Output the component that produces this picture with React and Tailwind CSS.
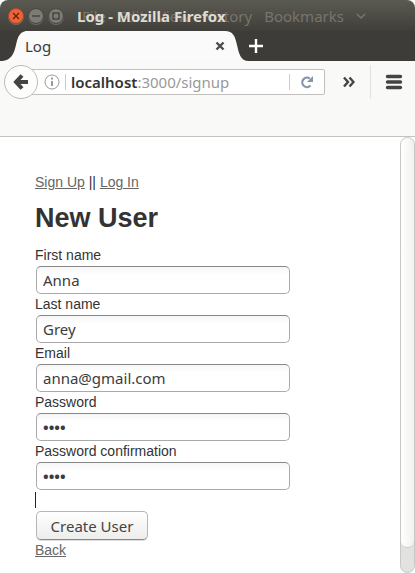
import React from 'react';

const uiFont = "font-['Noto_Sans','Open_Sans',sans-serif]";

const fields = [
  { id: 'first', label: 'First name', type: 'text', value: 'Anna' },
  { id: 'last', label: 'Last name', type: 'text', value: 'Grey' },
  { id: 'email', label: 'Email', type: 'text', value: 'anna@gmail.com' },
  { id: 'password', label: 'Password', type: 'password', value: 'abcd' },
  { id: 'confirm', label: 'Password confirmation', type: 'password', value: 'abcd' },
];

function WindowButton({ label, close, children }) {
  return (
    <button
      type="button"
      aria-label={label}
      className={`flex size-4 items-center justify-center rounded-full border shadow-[0_1px_0_#6b6a62] ${
        close ? 'border-[#a04a2c] bg-[#ee6237] text-[#5b1f0e]' : 'border-[#45443f] bg-[#7d7b73] text-[#3b3a36]'
      }`}
    >
      <svg viewBox="0 0 10 10" className="size-[10px] shrink-0" fill="none" stroke="currentColor" strokeWidth="1.2">
        {children}
      </svg>
    </button>
  );
}

function TitleBar() {
  return (
    <header className="relative flex h-[31px] items-center rounded-t-lg bg-linear-to-b from-[#5b5a52] to-[#413f3a] px-2">
      <div className="flex gap-1">
        <WindowButton label="Close" close>
          <path d="M2 2l6 6M8 2l-6 6" />
        </WindowButton>
        <WindowButton label="Minimize">
          <path d="M1 5h8" />
        </WindowButton>
        <WindowButton label="Maximize">
          <rect x="2" y="2" width="6" height="6" />
        </WindowButton>
      </div>
      <div className="ml-[18px] flex gap-3 whitespace-pre text-[15px] leading-5 text-[#77756d]">
        <span>File</span>
        <span>Edit</span>
        <span>View</span>
        <span>History</span>
        <span>Bookmarks</span>
        <svg viewBox="0 0 10 20" className="w-[10px]" fill="none" stroke="currentColor" strokeWidth="1.5">
          <path d="M1 8l4 4 4-4" />
        </svg>
      </div>
      <h2 className="absolute left-[77px] top-[6px] whitespace-nowrap text-[15px] font-bold leading-5 text-[#dfdbd2]">
        Log - Mozilla Firefox
      </h2>
    </header>
  );
}

function TabStrip() {
  return (
    <div className="flex h-[30px] bg-[#3d3c38]">
      <svg viewBox="0 0 28 30" className="h-[30px] w-7 shrink-0">
        <path d="M0 30C12 30 14 22 16 14C18 5 20 0 28 0V30Z" fill="#fafafa" />
      </svg>
      <div className="-ml-[3px] flex w-[200px] items-center justify-between bg-[#fafafa] text-[15px] text-[#3c3c3c]">
        <span>Log</span>
        <button type="button" aria-label="Close tab" className="text-[#4a4a4a]">
          <svg viewBox="0 0 10 10" className="size-[10px]" fill="none" stroke="currentColor" strokeWidth="2.4">
            <path d="M1.5 1.5l7 7M8.5 1.5l-7 7" />
          </svg>
        </button>
      </div>
      <svg viewBox="0 0 24 30" className="h-[30px] w-6 shrink-0">
        <path d="M0 0C8 0 10 5 12 14C14 22 15 30 24 30H0Z" fill="#fafafa" />
      </svg>
      <button type="button" aria-label="New tab" className="text-white">
        <svg viewBox="0 0 14 14" className="size-[14px]" fill="none" stroke="currentColor" strokeWidth="2.4">
          <path d="M7 0v14M0 7h14" />
        </svg>
      </button>
    </div>
  );
}

function Toolbar() {
  return (
    <div className="h-[76px] border-b border-[#c3c3c1] bg-[#f9f9f8] pl-1 pr-3">
      <div className="flex h-[41px] items-center">
        <button
          type="button"
          aria-label="Back"
          className="z-10 flex size-[34px] shrink-0 items-center justify-center rounded-full border border-[#bdbbb6] bg-[#fdfdfc] text-[#444]"
        >
          <svg viewBox="0 0 16 16" className="size-4" fill="none" stroke="currentColor" strokeWidth="4">
            <path d="M9 1.5L3 8l6 6.5M3.5 8H15" />
          </svg>
        </button>
        <div className="-ml-2 flex h-[26px] min-w-0 flex-1 items-center rounded-xs border border-[#c0bfbc] bg-white pl-[13px]">
          <svg viewBox="0 0 16 16" className="size-4 shrink-0" fill="none" stroke="#999">
            <circle cx="8" cy="8" r="7" />
            <path d="M8 7v5M8 3.5v2" strokeWidth="2" />
          </svg>
          <span className="ml-[5px] h-4 w-px shrink-0 bg-[#ccc]" />
          <div className="ml-[5px] flex-1 whitespace-nowrap text-[15px] leading-5 text-[#999]">
            <span className="font-semibold text-[#333]">localhost</span>:3000/signup
          </div>
          <span className="h-4 w-px shrink-0 bg-[#ccc]" />
          <button type="button" aria-label="Reload" className="mx-[10px] text-[#8795a6]">
            <svg viewBox="0 0 14 14" className="size-[14px]" fill="none" stroke="currentColor" strokeWidth="2.2">
              <path d="M10.5 10.5A4.7 4.7 0 1 1 9.8 3.6" />
              <path d="M13 1v6H7z" fill="currentColor" stroke="none" />
            </svg>
          </button>
        </div>
        <button type="button" aria-label="More tools" className="ml-[18px] text-[#444]">
          <svg viewBox="0 0 12 12" className="size-3" fill="none" stroke="currentColor" strokeWidth="2.4">
            <path d="M1 1.5L5 6l-4 4.5M6.5 1.5L10.5 6l-4 4.5" />
          </svg>
        </button>
        <span className="ml-[15px] h-[34px] w-px bg-[#e2e2e0]" />
        <button type="button" aria-label="Menu" className="ml-[14px] text-[#444]">
          <svg viewBox="0 0 18 16" className="h-4 w-[18px]" stroke="currentColor" strokeWidth="3.4" strokeLinecap="round">
            <path d="M2.5 2.5h13M2.5 8h13M2.5 13.5h13" />
          </svg>
        </button>
      </div>
    </div>
  );
}

function SignupPage() {
  return (
    <main className="flex-1 pl-[35px] pt-[35px] font-['Liberation_Sans',Arial,sans-serif] text-[14px] leading-5 text-[#333]">
      <nav>
        <a href="#signup" className="text-[#666] underline">Sign Up</a> ||{' '}
        <a href="#login" className="text-[#666] underline">Log In</a>
      </nav>
      <h1 className="mt-2 text-[27px] font-bold leading-9">New User</h1>
      <form className="mt-[9px]">
        {fields.map((f) => (
          <div key={f.id} className="flex flex-col">
            <label htmlFor={f.id} className="h-[21px]">{f.label}</label>
            <input
              id={f.id}
              type={f.type}
              defaultValue={f.value}
              className={`ml-px h-7 w-[254px] rounded-[5px] border border-[#aaa] border-t-[#888] bg-linear-to-b from-[#f6f6f6] to-white to-30% px-[6px] font-['Noto_Sans','Open_Sans',sans-serif] text-[15px] text-[#3c3c3c] ${
                f.type === 'password' ? 'font-bold' : ''
              }`}
            />
          </div>
        ))}
        <div className="h-[21px] pt-[2px]">
          <div className="h-4 w-px bg-[#222]" />
        </div>
        <button
          type="submit"
          className="ml-px block h-[29px] w-28 rounded-[5px] border border-[#b5b5b5] border-b-[#888] bg-linear-to-b from-white to-[#ededeb] font-['Noto_Sans','Open_Sans',sans-serif] text-[15px] text-[#444] shadow-[0_1px_0_#ddd]"
        >
          Create User
        </button>
      </form>
      <a href="#back" className="text-[#666] underline">Back</a>
    </main>
  );
}

export default function App() {
  return (
    <div className={`flex min-h-screen flex-col bg-white ${uiFont}`}>
      <TitleBar />
      <TabStrip />
      <Toolbar />
      <div className="flex flex-1">
        <SignupPage />
        <div className="flex w-[15px] shrink-0 flex-col rounded-lg border border-[#c8c8c5] bg-[#e2e2e1]">
          <div className="flex-1 rounded-lg border-b border-[#c8c8c5] bg-linear-to-r from-white to-[#f1f1ef]" />
          <div className="h-6" />
        </div>
      </div>
    </div>
  );
}
